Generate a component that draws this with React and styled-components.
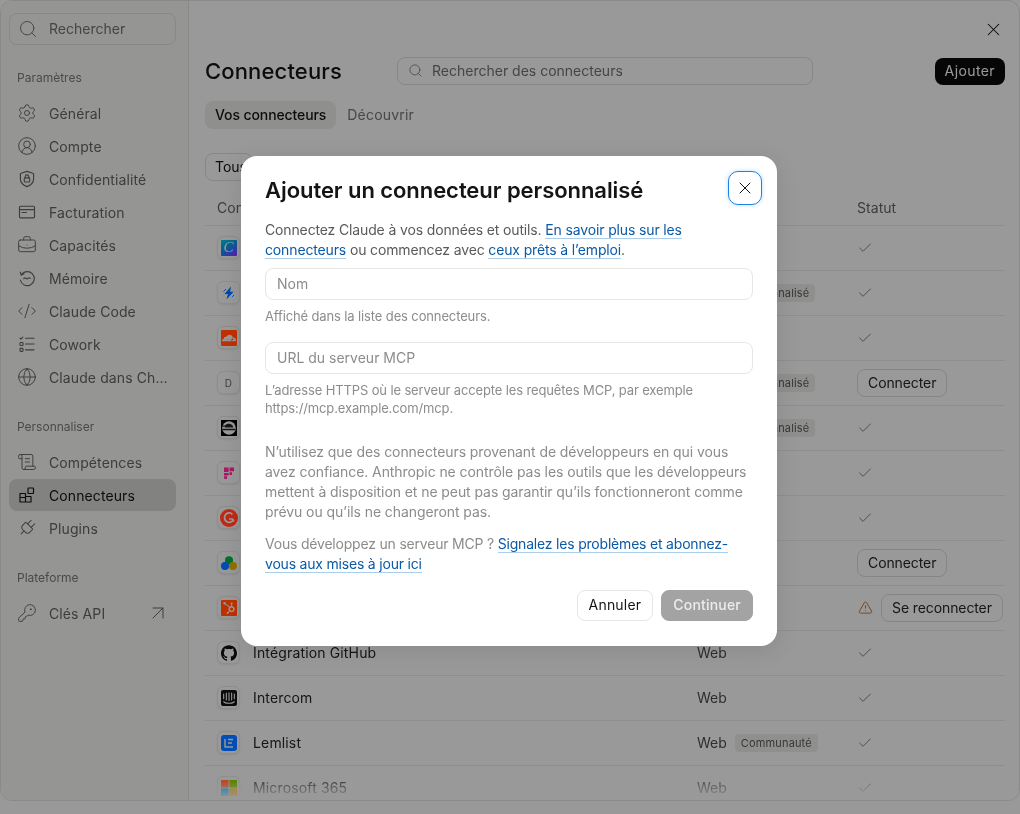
import React from "react";
import styled, { createGlobalStyle } from "styled-components";
import {
  ArrowUpRight,
  BriefcaseBusiness,
  Check,
  CircleUserRound,
  CodeXml,
  Globe,
  KeyRound,
  Plug,
  ScrollText,
  Search,
  Settings,
  TriangleAlert,
  X,
} from "lucide-react";
import { SiCloudflare, SiGithub, SiHubspot, SiIntercom } from "react-icons/si";

const GlobalStyle = createGlobalStyle`
  html, body {
    margin: 0;
    padding: 0;
    height: 100%;
    background: #fff;
    overflow: hidden;
  }
  * { box-sizing: border-box; }
  body {
    font-family: Inter, "Liberation Sans", sans-serif;
    font-size: 14px;
    color: #141413;
  }
`;

const Window = styled.div`
  display: flex;
  height: 801px;
  overflow: hidden;
  background: #fff;
  border: 1px solid #e4e4e2;
  border-radius: 12px;
`;

const Sidebar = styled.aside`
  flex: 0 0 188px;
  min-width: 0;
  padding: 12px 12px 12px 8px;
  background: #f8f8f6;
  border-right: 1px solid #e4e4e2;
`;

const SideSearch = styled.div`
  display: flex;
  align-items: center;
  gap: 11px;
  height: 32px;
  padding: 0 8px 1px;
  color: #737373;
  border: 1px solid #e2e2e0;
  border-radius: 8px;
`;

const Section = styled.section`
  margin-top: 25px;
  &:first-of-type {
    margin-top: 24px;
  }
`;

const SectionLabel = styled.div`
  height: 18px;
  margin-bottom: 10px;
  padding-left: 8px;
  font-size: 12px;
  line-height: 18px;
  color: #7c7c7a;
`;

const NavList = styled.nav`
  display: flex;
  flex-direction: column;
  gap: 1px;
`;

const NavItem = styled.div`
  display: flex;
  align-items: center;
  gap: 12px;
  height: 32px;
  padding: 0 8px;
  border-radius: 8px;
  color: ${(p) => (p.$active ? "#141413" : "#666664")};
  background: ${(p) => (p.$active ? "#d8d8d6" : "transparent")};
  letter-spacing: 0.1px;
  svg {
    flex: none;
  }
`;

const NavText = styled.span`
  overflow: hidden;
  white-space: nowrap;
  text-overflow: ellipsis;
`;

const NavArrow = styled(ArrowUpRight)`
  margin-left: auto;
  margin-right: -2px;
`;

const Main = styled.main`
  position: relative;
  flex: 1;
  min-width: 0;
  padding: 0 14px 0 16px;
  overflow: hidden;
  &::after {
    content: "";
    position: absolute;
    left: 0;
    right: 0;
    bottom: 0;
    height: 28px;
    background: linear-gradient(rgba(255, 255, 255, 0), #fff);
  }
`;

const TopRow = styled.div`
  display: flex;
  justify-content: flex-end;
  align-items: center;
  height: 56px;
`;

const IconButton = styled.div`
  display: flex;
  align-items: center;
  justify-content: center;
  width: 24px;
  height: 24px;
`;

const HeadRow = styled.div`
  display: grid;
  grid-template-columns: 192px 416px 1fr;
  align-items: center;
  height: 28px;
`;

const Title = styled.h1`
  margin: 0;
  font-size: 22px;
  font-weight: 500;
  letter-spacing: 0.15px;
  color: #141413;
`;

const PageSearch = styled.div`
  display: flex;
  align-items: center;
  gap: 9px;
  height: 28px;
  padding: 0 10px 1px;
  color: #737373;
  border: 1px solid #e0e0de;
  border-radius: 8px;
`;

const AddButton = styled.div`
  justify-self: end;
  display: flex;
  align-items: center;
  height: 27px;
  padding: 0 10px 1px;
  color: #fff;
  background: #0a0a0a;
  border-radius: 8px;
  letter-spacing: 0.4px;
`;

const Tabs = styled.div`
  display: flex;
  gap: 1px;
  margin-top: 16px;
`;

const Tab = styled.div`
  display: flex;
  align-items: center;
  height: 28px;
  padding: 0 10px 1px;
  border-radius: 8px;
  letter-spacing: ${(p) => (p.$active ? "-0.1px" : "0.2px")};
  font-weight: ${(p) => (p.$active ? 500 : 400)};
  color: ${(p) => (p.$active ? "#141413" : "#777775")};
  background: ${(p) => (p.$active ? "#eeeeec" : "transparent")};
`;

const FilterButton = styled.div`
  display: flex;
  align-items: center;
  width: 48px;
  height: 28px;
  margin-top: 24px;
  padding: 0 9px 1px;
  border: 1px solid #e0e0de;
  border-radius: 8px;
`;

const RowGrid = styled.div`
  display: grid;
  grid-template-columns: 480px 160px 1fr;
  align-items: center;
  padding-left: 12px;
  border-bottom: 1px solid #ecece9;
`;

const HeaderRow = styled(RowGrid)`
  height: 36px;
  margin-top: 9px;
  color: #666664;
  letter-spacing: 0.05px;
`;

const Row = styled(RowGrid)`
  height: 45px;
  padding-bottom: 1px;
`;

const NameCell = styled.div`
  display: flex;
  align-items: center;
  gap: 13px;
  color: #262624;
  letter-spacing: 0.15px;
`;

const LogoBox = styled.div`
  display: flex;
  align-items: center;
  justify-content: center;
  flex: none;
  width: 23px;
  height: 23px;
  border: 1px solid #ececea;
  border-radius: 6px;
  background: #fff;
  box-shadow: 0 1px 2px rgba(0, 0, 0, 0.08);
`;

const LogoLetter = styled.span`
  font-size: 10px;
  color: #666664;
`;

const TypeCell = styled.div`
  display: flex;
  align-items: center;
  gap: 8px;
  color: #4d4d4b;
`;

const Badge = styled.span`
  display: inline-flex;
  align-items: center;
  height: 18px;
  padding: 0 6px;
  font-size: 11px;
  letter-spacing: 0.15px;
  color: #5c5c5a;
  background: #eeeeec;
  border-radius: 4px;
`;

const StatusCell = styled.div`
  display: flex;
  align-items: center;
  gap: 8px;
  color: #555553;
`;

const WarnIcon = styled(TriangleAlert)`
  margin-left: 1px;
  color: #a86c38;
`;

const RowButton = styled.div`
  display: flex;
  align-items: center;
  height: 28px;
  padding: 0 10px;
  white-space: nowrap;
  letter-spacing: -0.1px;
  color: #262624;
  background: #fff;
  border: 1px solid #dededc;
  border-radius: 8px;
`;

// dims the page behind the dialog; logos keep their saturation
const Overlay = styled.div`
  position: fixed;
  inset: 0;
  display: flex;
  align-items: flex-start;
  justify-content: center;
  padding-top: 156px;
  backdrop-filter: brightness(0.6) saturate(1.7);
`;

const Modal = styled.div`
  position: relative;
  width: 536px;
  height: 490px;
  margin-right: 2px;
  padding: 20px 24px;
  background: #fff;
  border-radius: 16px;
  box-shadow: 0 4px 24px rgba(0, 0, 0, 0.1);
`;

const ModalClose = styled.div`
  position: absolute;
  top: 15px;
  right: 15px;
  display: flex;
  align-items: center;
  justify-content: center;
  width: 34px;
  height: 34px;
  border: 1px solid #1b83e0;
  border-radius: 10px;
  box-shadow: 0 0 4px rgba(27, 131, 224, 0.3);
`;

const ModalTitle = styled.h2`
  margin: 0;
  height: 28px;
  font-size: 22px;
  line-height: 28px;
  font-weight: 600;
  letter-spacing: -0.06px;
  color: #141413;
`;

const Intro = styled.p`
  margin: 16px 0 8px;
  line-height: 20px;
  letter-spacing: -0.14px;
  color: #5a5a58;
`;

const Link = styled.a`
  color: #0b5aa6;
  border-bottom: 1px solid #a9cdea;
`;

const Field = styled.div`
  display: flex;
  align-items: center;
  height: 32px;
  padding: 0 11px 1px;
  color: #8c8c8a;
  border: 1px solid #e6e6e4;
  border-radius: 8px;
`;

const Hint = styled.p`
  margin: 7px 0 17px;
  font-size: 13px;
  line-height: 18px;
  letter-spacing: -0.13px;
  color: #8c8c8a;
`;

const Notice = styled.p`
  margin: ${(p) => (p.$first ? "25px 0 0" : "12px 0 0")};
  line-height: 20px;
  letter-spacing: ${(p) => (p.$first ? "-0.08px" : "-0.2px")};
  color: #8c8c8a;
`;

const Actions = styled.div`
  display: flex;
  justify-content: flex-end;
  gap: 8px;
  margin-top: 16px;
`;

const ModalButton = styled.div`
  display: flex;
  align-items: center;
  height: 31px;
  padding: 0 11px 2px;
  border-radius: 8px;
  letter-spacing: 0.2px;
  color: ${(p) => (p.$disabled ? "#ececea" : "#141413")};
  background: ${(p) => (p.$disabled ? "#a3a3a3" : "#fff")};
  border: 1px solid ${(p) => (p.$disabled ? "#a3a3a3" : "#e6e6e4")};
  font-weight: ${(p) => (p.$disabled ? 500 : 400)};
`;

const Stroke = ({ children }) => (
  <svg
    width="20"
    height="20"
    viewBox="0 0 20 20"
    fill="none"
    stroke="currentColor"
    strokeWidth="1.15"
    strokeLinecap="round"
    strokeLinejoin="round"
  >
    {children}
  </svg>
);

const ShieldIcon = () => (
  <Stroke>
    <path d="M10 2.4 16 4.3c.4.1.6.4.6.8V10c0 3.600-2.900 6.200-6.600 7.600C6.300 16.200 3.400 13.600 3.400 10V5.100c0-.4.2-.7.6-.8Z" />
    <rect x="7.300" y="8.800" width="5.400" height="4.200" rx="0.800" />
    <path d="M8.300 8.800V7.500a1.700 1.700 0 0 1 3.400 0v1.300" />
  </Stroke>
);

const CardIcon = () => (
  <Stroke>
    <rect x="2.500" y="4.200" width="15" height="11.600" rx="1" />
    <path d="M2.500 7.600h15M5 10.500h4.500" />
  </Stroke>
);

const MemoryIcon = () => (
  <Stroke>
    <path d="M3.300 4.200 4.300 7a7 7 0 1 1-.9 5" />
    <path d="M4.300 7 7 6" />
    <path d="M6.700 10.600c.8-1 1.500-1 2.200-.3s1.400.7 2.200 0 1.500-.7 2.200.2" />
  </Stroke>
);

const CoworkIcon = () => (
  <Stroke>
    <path d="m3 4.200 1 1 1.800-2M8.500 4.200h8.500M8.500 10h8.500M8.500 15.800h8.500" />
    <rect x="3" y="8.500" width="3" height="3" rx="0.800" />
    <rect x="3" y="14.300" width="3" height="3" rx="0.800" />
  </Stroke>
);

const BlocksIcon = () => (
  <Stroke>
    <path d="M3 8.500h5.500V17H3ZM8.500 11.500H14V17H8.500ZM3 12.500h5.500" />
    <rect x="11" y="3" width="5.500" height="5.500" rx="0.500" />
  </Stroke>
);

const PlugIcon = styled(Plug)`
  transform: rotate(45deg);
`;

const CanvaLogo = styled.div`
  display: flex;
  align-items: center;
  justify-content: center;
  width: 16px;
  height: 16px;
  border-radius: 1px;
  color: #fff;
  font: italic 15px "Liberation Serif", serif;
  background: linear-gradient(150deg, #2cc4c4 0%, #3d8fc8 45%, #7a3ad8 100%);
`;

const SquareLogo = styled.div`
  display: flex;
  align-items: center;
  justify-content: center;
  width: 16px;
  height: 16px;
  color: #fff;
  background: ${(p) => p.$bg};
  border-radius: ${(p) => p.$radius || 1}px;
`;

const BoltLogo = () => (
  <svg width="16" height="16" viewBox="0 0 16 16" fill="#1f6fd8">
    <path d="M10 1.500 3.500 9H7l-1.500 5.500L12.500 6.800H9Z" />
    <path d="M2.500 6.500 5 4M11 12l2-2" stroke="#1f6fd8" strokeWidth="0.800" />
  </svg>
);

const DiskLogo = () => (
  <svg width="16" height="16" viewBox="0 0 16 16">
    <rect width="16" height="16" fill="#000" />
    <circle cx="8" cy="8" r="6.800" fill="#fff" />
    <path d="M1.500 6.200h9M1.600 9.500h12.800" stroke="#222" strokeWidth="1.300" />
    <path d="M4 5.500c1.500-2.200 6-2.200 7.500 0l1 2H4Z" fill="#222" />
  </svg>
);

const FirefliesLogo = () => (
  <svg width="16" height="16" viewBox="0 0 16 16" fill="#d0408c">
    <path d="M3 2.500h4.600V7H3ZM8.500 2.500H13V6.200H8.500ZM3 8h4.600v2.400H3ZM8.500 7.200H11V10H8.500ZM3 11.300h3V14H4.500A1.500 1.500 0 0 1 3 12.500Z" />
  </svg>
);

const G2Logo = () => (
  <svg width="18" height="18" viewBox="0 0 18 18">
    <circle cx="9" cy="9" r="9" fill="#ee5a44" />
    <path d="M12.500 5.300A4.700 4.700 0 1 0 13.500 10.500" fill="none" stroke="#fff" strokeWidth="1.800" />
    <path d="M9 10h3.500l1.500 2.500" fill="none" stroke="#fff" strokeWidth="1.500" />
  </svg>
);

const TriLogo = () => (
  <svg width="16" height="16" viewBox="0 0 16 16">
    <circle cx="8" cy="5.200" r="4" fill="#2aa860" />
    <circle cx="4" cy="11" r="4" fill="#2a7ae0" />
    <circle cx="12" cy="11" r="4" fill="#dcb848" />
  </svg>
);

const LemlistLogo = () => (
  <svg width="10" height="10" viewBox="0 0 10 10" fill="none" stroke="#fff" strokeWidth="1.400">
    <path d="M1 1v8h8M4 1.500h5M4 5h4" />
  </svg>
);

const MicrosoftLogo = () => (
  <svg width="16" height="16" viewBox="0 0 16 16">
    <rect width="7.600" height="7.600" fill="#f25022" />
    <rect x="8.400" width="7.600" height="7.600" fill="#7fba00" />
    <rect y="8.400" width="7.600" height="7.600" fill="#00a4ef" />
    <rect x="8.400" y="8.400" width="7.600" height="7.600" fill="#ffb900" />
  </svg>
);

const settingsNav = [
  { label: "Général", icon: <Settings size={20} strokeWidth={1.15} /> },
  { label: "Compte", icon: <CircleUserRound size={20} strokeWidth={1.15} /> },
  { label: "Confidentialité", icon: <ShieldIcon /> },
  { label: "Facturation", icon: <CardIcon /> },
  { label: "Capacités", icon: <BriefcaseBusiness size={20} strokeWidth={1.15} /> },
  { label: "Mémoire", icon: <MemoryIcon /> },
  { label: "Claude Code", icon: <CodeXml size={20} strokeWidth={1.15} /> },
  { label: "Cowork", icon: <CoworkIcon /> },
  { label: "Claude dans Chrome", icon: <Globe size={20} strokeWidth={1.15} /> },
];

const customNav = [
  { label: "Compétences", icon: <ScrollText size={20} strokeWidth={1.15} /> },
  { label: "Connecteurs", icon: <BlocksIcon />, active: true },
  { label: "Plugins", icon: <PlugIcon size={20} strokeWidth={1.15} /> },
];

const rows = [
  { logo: <CanvaLogo>C</CanvaLogo>, status: "ok" },
  { logo: <BoltLogo />, badge: "Personnalisé", status: "ok" },
  {
    logo: (
      <SquareLogo $bg="#f0622e">
        <SiCloudflare size={14} />
      </SquareLogo>
    ),
    status: "ok",
  },
  { logo: <LogoLetter>D</LogoLetter>, badge: "Personnalisé", status: "connect" },
  { logo: <DiskLogo />, badge: "Personnalisé", status: "ok" },
  { logo: <FirefliesLogo />, status: "ok" },
  { logo: <G2Logo />, status: "ok" },
  { logo: <TriLogo />, status: "connect" },
  {
    logo: (
      <SquareLogo $bg="#f0622e">
        <SiHubspot size={12} />
      </SquareLogo>
    ),
    status: "reconnect",
  },
  { logo: <SiGithub size={16} color="#111" />, name: "Intégration GitHub", status: "ok" },
  { logo: <SiIntercom size={16} color="#111" />, name: "Intercom", status: "ok" },
  {
    logo: (
      <SquareLogo $bg="#2f7ae0" $radius={3}>
        <LemlistLogo />
      </SquareLogo>
    ),
    name: "Lemlist",
    badge: "Communauté",
    status: "ok",
  },
  { logo: <MicrosoftLogo />, name: "Microsoft 365", status: "ok" },
];

const Status = ({ kind }) => {
  if (kind === "connect") return <RowButton>Connecter</RowButton>;
  if (kind === "reconnect") {
    return (
      <>
        <WarnIcon size={15} strokeWidth={1.4} />
        <RowButton>Se reconnecter</RowButton>
      </>
    );
  }
  return <Check size={16} strokeWidth={1.1} />;
};

const NavGroup = ({ items }) => (
  <NavList>
    {items.map((item) => (
      <NavItem key={item.label} $active={item.active}>
        {item.icon}
        <NavText>{item.label}</NavText>
      </NavItem>
    ))}
  </NavList>
);

export default function App() {
  return (
    <>
      <GlobalStyle />
      <Window>
        <Sidebar>
          <SideSearch>
            <Search size={20} strokeWidth={1.15} />
            Rechercher
          </SideSearch>
          <Section>
            <SectionLabel>Paramètres</SectionLabel>
            <NavGroup items={settingsNav} />
          </Section>
          <Section>
            <SectionLabel>Personnaliser</SectionLabel>
            <NavGroup items={customNav} />
          </Section>
          <Section>
            <SectionLabel>Plateforme</SectionLabel>
            <NavList>
              <NavItem>
                <KeyRound size={20} strokeWidth={1.15} />
                <NavText>Clés API</NavText>
                <NavArrow size={24} strokeWidth={1} />
              </NavItem>
            </NavList>
          </Section>
        </Sidebar>
        <Main>
          <TopRow>
            <IconButton>
              <X size={21} strokeWidth={1.2} />
            </IconButton>
          </TopRow>
          <HeadRow>
            <Title>Connecteurs</Title>
            <PageSearch>
              <Search size={15} strokeWidth={1.2} />
              Rechercher des connecteurs
            </PageSearch>
            <AddButton>Ajouter</AddButton>
          </HeadRow>
          <Tabs>
            <Tab $active>Vos connecteurs</Tab>
            <Tab>Découvrir</Tab>
          </Tabs>
          <FilterButton>Tous</FilterButton>
          <HeaderRow>
            <div>Connecteur</div>
            <div>Type</div>
            <div>Statut</div>
          </HeaderRow>
          {rows.map((row, i) => (
            <Row key={i}>
              <NameCell>
                <LogoBox>{row.logo}</LogoBox>
                {row.name}
              </NameCell>
              <TypeCell>
                Web
                {row.badge && <Badge>{row.badge}</Badge>}
              </TypeCell>
              <StatusCell>
                <Status kind={row.status} />
              </StatusCell>
            </Row>
          ))}
        </Main>
      </Window>
      <Overlay>
        <Modal>
          <ModalClose>
            <X size={20} strokeWidth={1.2} />
          </ModalClose>
          <ModalTitle>Ajouter un connecteur personnalisé</ModalTitle>
          <Intro>
            Connectez Claude à vos données et outils. <Link>En savoir plus sur les</Link>
            <br />
            <Link>connecteurs</Link> ou commencez avec <Link>ceux prêts à l’emploi</Link>.
          </Intro>
          <Field>Nom</Field>
          <Hint>Affiché dans la liste des connecteurs.</Hint>
          <Field>URL du serveur MCP</Field>
          <Hint>
            L’adresse HTTPS où le serveur accepte les requêtes MCP, par exemple
            <br />
            https://mcp.example.com/mcp.
          </Hint>
          <Notice $first>
            N’utilisez que des connecteurs provenant de développeurs en qui vous
            <br />
            avez confiance. Anthropic ne contrôle pas les outils que les développeurs
            <br />
            mettent à disposition et ne peut pas garantir qu’ils fonctionneront comme
            <br />
            prévu ou qu’ils ne changeront pas.
          </Notice>
          <Notice>
            Vous développez un serveur MCP ? <Link>Signalez les problèmes et abonnez-</Link>
            <br />
            <Link>vous aux mises à jour ici</Link>
          </Notice>
          <Actions>
            <ModalButton>Annuler</ModalButton>
            <ModalButton $disabled>Continuer</ModalButton>
          </Actions>
        </Modal>
      </Overlay>
    </>
  );
}
